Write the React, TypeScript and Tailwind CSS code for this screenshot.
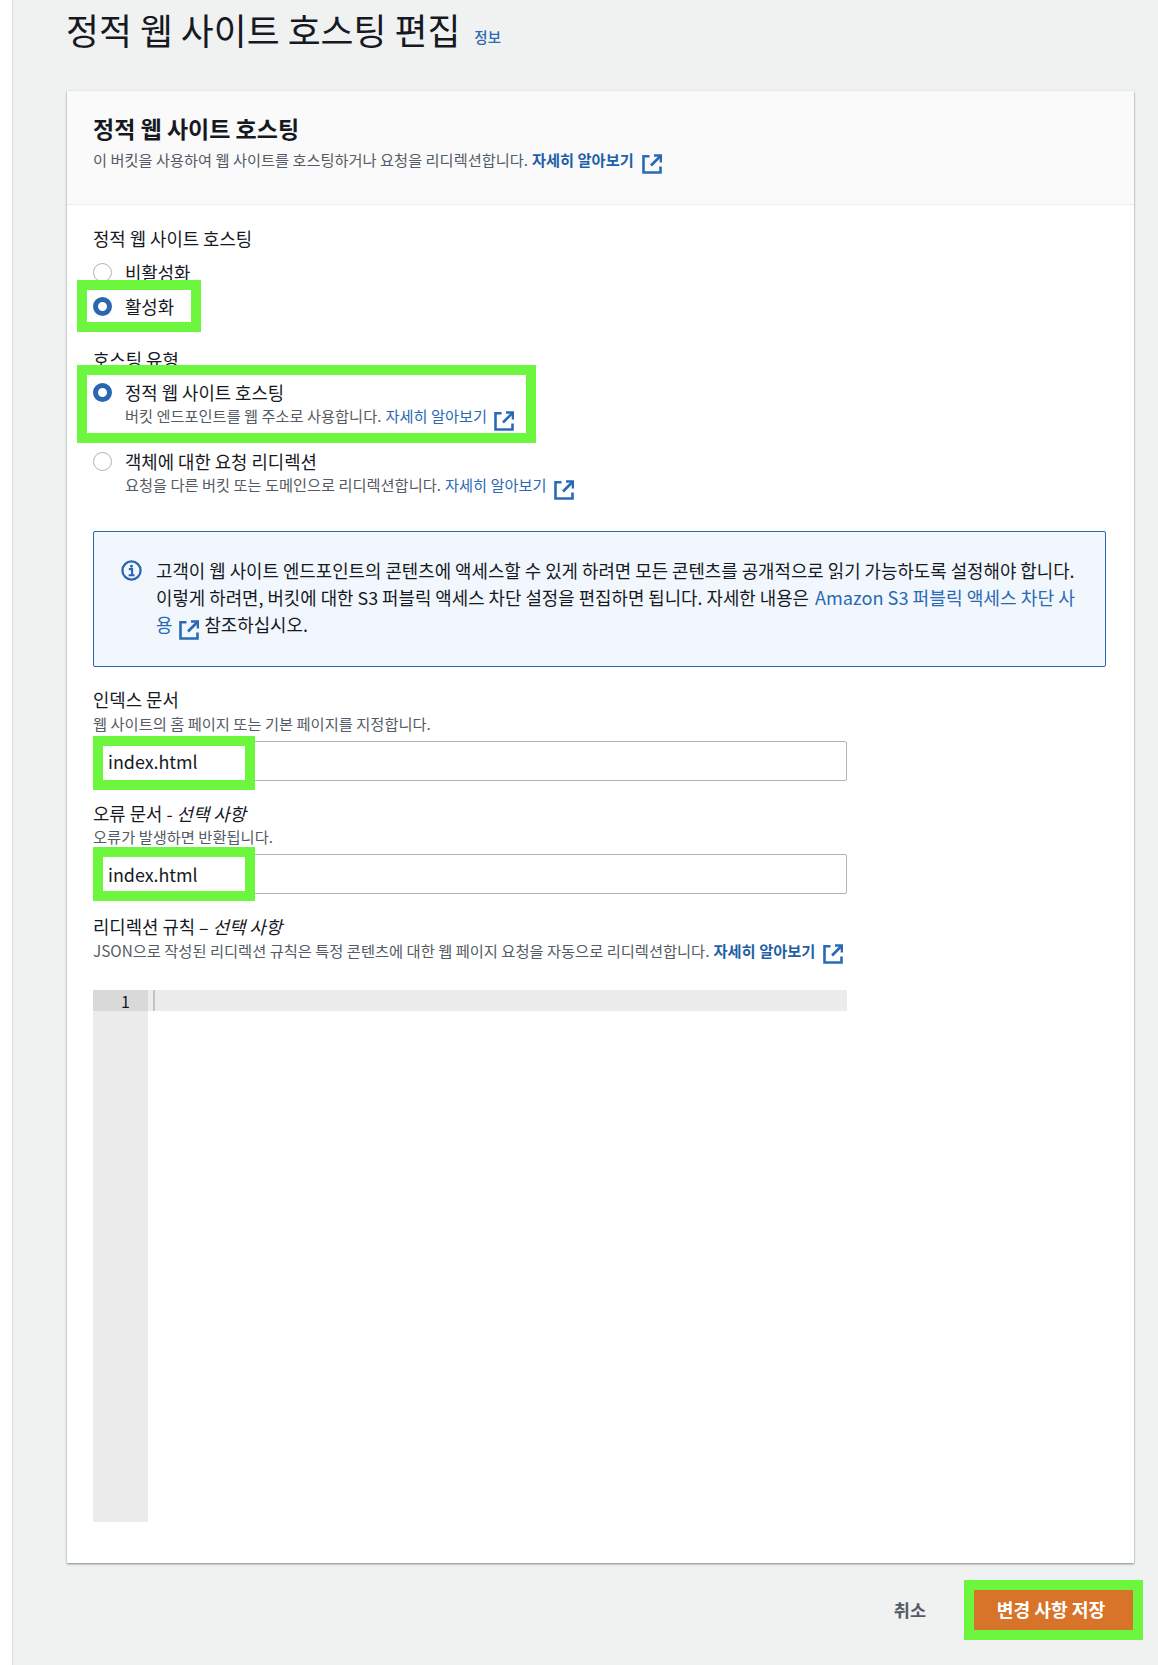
import type { ReactNode } from "react";

const FONT = "font-['Noto_Sans_CJK_KR','Noto_Sans',sans-serif]";

function ExternalIcon({ className = "" }: { className?: string }) {
  return (
    <svg
      viewBox="0 0 20 20"
      fill="none"
      stroke="currentColor"
      strokeWidth="2.6"
      className={`inline-block h-[20px] w-[20px] text-[#2a69b4] ${className}`}
    >
      <path d="M7.5 2.3H1.5v16.2h17v-6" />
      <path d="M12 1.5h7v7" />
      <path d="M18.5 2L9 11.5" />
    </svg>
  );
}

function Radio({ checked = false }: { checked?: boolean }) {
  return (
    <span
      className={`block h-[19px] w-[19px] shrink-0 rounded-full bg-white ${
        checked ? "border-[5px] border-[#2b67b0]" : "border border-[#aab7b8]"
      }`}
    />
  );
}

function FieldLabel({ children, className = "" }: { children: ReactNode; className?: string }) {
  return <div className={`flex items-center text-[17.8px] text-[#16191f] ${className}`}>{children}</div>;
}

function Hint({ children, className = "" }: { children: ReactNode; className?: string }) {
  return <div className={`flex items-center text-[15.3px] text-[#545b64] ${className}`}>{children}</div>;
}

// the green marker starts a little higher on the second field
function TextField({ value, marker }: { value: string; marker: string }) {
  return (
    <div className="relative mt-[6px] flex h-[40px] w-[754px] items-center rounded-[2px] border border-[#aab7b8] bg-white">
      <div className={`absolute -left-px h-[54px] w-[162px] border-[10px] border-[#6cf73e] bg-white ${marker}`} />
      <span className="relative pl-[14px] text-[17.9px] text-[#16191f]">{value}</span>
    </div>
  );
}

export default function App() {
  return (
    <div className={`flex h-[1665px] w-[1158px] overflow-hidden bg-[#f0f1f1] ${FONT}`}>
      <div className="w-[13px] shrink-0 border-r border-[#d5dbdb] bg-white" />

      <main className="flex-1 pl-[54px] pr-[24px]">
        <div className="-ml-px flex h-[91px] items-start pt-[5px]">
          <h1 className="text-[35.8px] leading-[48px] font-normal text-[#16191f]">정적 웹 사이트 호스팅 편집</h1>
          <a className="ml-[14px] mt-[21px] text-[14.5px] leading-[22px] font-medium text-[#2a69b4]">정보</a>
        </div>

        <section className="h-[1472px] bg-white shadow-[0_1px_2px_rgba(0,28,36,0.5)]">
          <header className="h-[114px] border-b border-[#eaeded] bg-[#fafafa] px-[26px] pt-[21px]">
            <h2 className="h-[32px] text-[23px] leading-[32px] font-bold text-[#16191f]">정적 웹 사이트 호스팅</h2>
            <p className="mt-[2px] flex h-[26px] items-center text-[15.25px] text-[#545b64]">
              이 버킷을 사용하여 웹 사이트를 호스팅하거나 요청을 리디렉션합니다.
              <a className="ml-[4px] font-bold text-[#1f5fa8]">자세히 알아보기</a>
              <ExternalIcon className="ml-[8px] mt-[10px]" />
            </p>
          </header>

          <div className="px-[26px] pt-[20px]">
            <FieldLabel className="mb-[4px] h-[26px]">정적 웹 사이트 호스팅</FieldLabel>

            <label className="flex h-[34px] items-center gap-[13px] text-[17.8px] text-[#16191f]">
              <Radio />
              비활성화
            </label>
            <label className="relative flex h-[34px] items-center text-[17.8px] text-[#16191f]">
              <span className="absolute -left-[16px] -top-[9px] h-[52px] w-[124px] border-[10px] border-[#6cf73e] bg-white" />
              <span className="relative flex items-center gap-[13px]">
                <Radio checked />
                활성화
              </span>
            </label>

            <FieldLabel className="mt-[22px] h-[28px]">호스팅 유형</FieldLabel>

            <div className="relative mt-[7px] h-[48px]">
              <div className="absolute -left-[16px] -top-[15px] h-[78px] w-[459px] border-[10px] border-[#6cf73e] bg-white" />
              <div className="relative flex h-[24px] items-center gap-[13px] text-[17.8px] text-[#16191f]">
                <Radio checked />
                정적 웹 사이트 호스팅
              </div>
              <div className="relative flex h-[23px] items-center pl-[32px] text-[15.25px] text-[#545b64]">
                버킷 엔드포인트를 웹 주소로 사용합니다.
                <a className="ml-[4px] text-[#2a69b4]">자세히 알아보기</a>
                <ExternalIcon className="ml-[7px] mt-[10px]" />
              </div>
            </div>

            <div className="mt-[21px] flex h-[24px] items-center gap-[13px] text-[17.8px] text-[#16191f]">
              <Radio />
              객체에 대한 요청 리디렉션
            </div>
            <div className="flex h-[23px] items-center pl-[32px] text-[15.25px] text-[#545b64]">
              요청을 다른 버킷 또는 도메인으로 리디렉션합니다.
              <a className="ml-[4px] text-[#2a69b4]">자세히 알아보기</a>
              <ExternalIcon className="ml-[7px] mt-[10px]" />
            </div>

            <div className="mr-[2px] mt-[35px] flex h-[136px] rounded-[2px] border border-[#2b67b0] bg-[#f1f7fd] pl-[27px] pt-[25px]">
              <svg viewBox="0 0 22 22" className="mt-[3px] h-[21px] w-[21px] shrink-0 text-[#2b67b0]" fill="none" stroke="currentColor">
                <circle cx="11" cy="11" r="9.5" strokeWidth="2.4" />
                <circle cx="11" cy="6.6" r="1.5" fill="currentColor" stroke="none" />
                <path d="M8.2 9.6h3.4v6M8 16h6.2" strokeWidth="2.2" />
              </svg>
              <p className="ml-[14px] text-[17.85px] leading-[27px] whitespace-nowrap text-[#16191f]">
                고객이 웹 사이트 엔드포인트의 콘텐츠에 액세스할 수 있게 하려면 모든 콘텐츠를 공개적으로 읽기 가능하도록 설정해야 합니다.
                <br />
                이렇게 하려면, 버킷에 대한 S3 퍼블릭 액세스 차단 설정을 편집하면 됩니다. 자세한 내용은{" "}
                <a className="ml-[2px] text-[18.15px] text-[#2a69b4]">Amazon S3 퍼블릭 액세스 차단 사</a>
                <br />
                <a className="text-[#2a69b4]">용</a>
                <ExternalIcon className="ml-[7px] mr-[5px] -mb-[5px]" />
                참조하십시오.
              </p>
            </div>

            <FieldLabel className="mt-[20px] h-[24px]">인덱스 문서</FieldLabel>
            <Hint className="h-[24px]">웹 사이트의 홈 페이지 또는 기본 페이지를 지정합니다.</Hint>
            <TextField value="index.html" marker="-top-[6px]" />

            <FieldLabel className="mt-[20px] h-[24px]">
              오류 문서 -&nbsp;<i>선택 사항</i>
            </FieldLabel>
            <Hint className="h-[23px]">오류가 발생하면 반환됩니다.</Hint>
            <TextField value="index.html" marker="-top-[8px]" />

            <FieldLabel className="mt-[20px] h-[24px]">
              리디렉션 규칙 –&nbsp;<i>선택 사항</i>
            </FieldLabel>
            <Hint className="h-[24px]">
              JSON으로 작성된 리디렉션 규칙은 특정 콘텐츠에 대한 웹 페이지 요청을 자동으로 리디렉션합니다.
              <a className="ml-[4px] font-bold text-[#1f5fa8]">자세히 알아보기</a>
              <ExternalIcon className="ml-[8px] mt-[8px]" />
            </Hint>

            <div className="mt-[28px] flex h-[532px] w-[754px]">
              <div className="w-[55px] bg-[#ececec]">
                <div className="flex h-[21px] items-center justify-end bg-[#d9d9d9] pr-[18px] text-[16px] text-[#16191f]">1</div>
              </div>
              <div className="flex h-[21px] flex-1 bg-[#ececec] pl-[5px]">
                <span className="h-full w-[2px] bg-[#c4c4c4]" />
              </div>
            </div>
          </div>
        </section>

        <div className="mt-[25px] flex items-center justify-end gap-[48px] pr-px">
          <button className="text-[17.5px] font-bold text-[#545b64]">취소</button>
          <button className="relative h-[44px] w-[159px] border-y-2 border-white bg-[#d8732a] pr-[5px] text-[18.2px] font-bold text-white">
            <span className="absolute -inset-[10px] border-[10px] border-[#6cf73e]" />
            변경 사항 저장
          </button>
        </div>
      </main>
    </div>
  );
}
